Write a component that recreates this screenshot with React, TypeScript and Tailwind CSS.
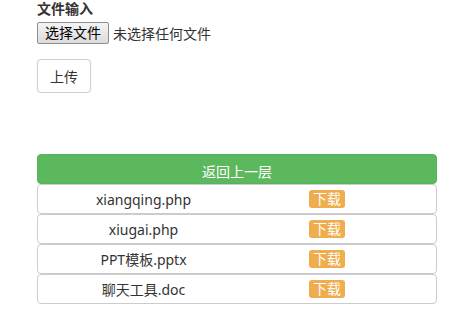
import React from "react";

const files = ["xiangqing.php", "xiugai.php", "PPT模板.pptx", "聊天工具.doc"];

export default function App() {
  return (
    <div
      className="w-[472px] h-[316px] bg-white pl-[37px] text-[#333] text-[14px]"
      style={{ fontFamily: '"Segoe UI", "Noto Sans", "Noto Sans CJK SC", sans-serif' }}
    >
      <div className="font-bold leading-[17px] pt-0">文件输入</div>
      <div className="mt-[5px] flex items-center h-[22px]">
        <div className="h-[22px] w-[72px] border border-[#8f8f8f] rounded-[2px] bg-gradient-to-b from-[#f4f4f4] to-[#dcdcdc] flex items-center justify-center text-[14px] text-black leading-none">
          选择文件
        </div>
        <span className="ml-[4px] text-[14px] text-[#333]">未选择任何文件</span>
      </div>
      <div className="mt-[15px] w-[54px] h-[34px] border border-[#ccc] rounded-[4px] flex items-center justify-center text-[14px] text-[#333]">
        上传
      </div>
      <div className="mt-[61px] w-[400px]">
        <div className="h-[30px] rounded-[4px] bg-[#5cb85c] border border-[#56b356] text-white flex items-center justify-center pt-[5px] text-[14px]">
          返回上一层
        </div>
        {files.map((f) => (
          <div
            key={f}
            className="h-[30px] border border-[#cccccc] rounded-[4px] flex items-center"
          >
            <div className="w-[211px] text-center text-[14px] text-[#333] pt-[1px]">{f}</div>
            <div className="ml-[60px] h-[18px] px-[4px] rounded-[3px] bg-[#f0ad4e] text-white text-[14px] leading-[18px] flex items-center">
              下载
            </div>
          </div>
        ))}
      </div>
    </div>
  );
}
